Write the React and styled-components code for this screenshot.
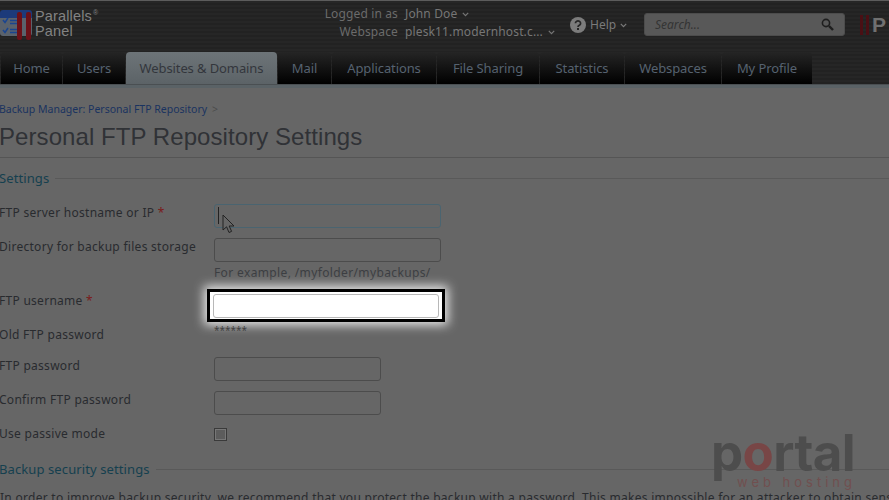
import React from 'react';
import styled, { createGlobalStyle } from 'styled-components';

const GlobalStyle = createGlobalStyle`
  html, body {
    margin: 0;
    padding: 0;
    background: #666;
  }
  body {
    font-family: "Noto Sans", "Open Sans", sans-serif;
    font-size: 12px;
  }
`;

// ######################### Styling  ################################

const Page = styled.div`
  position: relative;
  width: 889px;
  height: 500px;
  overflow: hidden;
  background: #666;
`;

const Header = styled.header`
  display: flex;
  align-items: flex-start;
  height: 51px;
  border-top: 1px solid #5c5c5c;
  background: repeating-linear-gradient(180deg, #262626 0, #262626 2px, #222 2px, #222 4px);
`;

const Logo = styled.div`
  display: flex;
  align-items: flex-start;
  padding-top: 9px;
  width: 323px;
`;

const LogoText = styled.div`
  margin: -1px 0 0 3px;
  font-family: "Liberation Sans", Arial, sans-serif;
  font-size: 14.5px;
  line-height: 14.5px;
  letter-spacing: 0.15px;
  color: #828282;
  sup {
    font-size: 7px;
    line-height: 0;
    vertical-align: 6px;
    margin-left: 1px;
  }
`;

const UserInfo = styled.div`
  display: grid;
  grid-template-columns: 75px auto;
  column-gap: 7px;
  row-gap: 2px;
  width: 238px;
  padding-top: 5px;
  font-size: 12px;
  line-height: 16px;
  letter-spacing: 0.14px;
  color: #6b6b6b;
`;

const InfoLabel = styled.span`
  text-align: right;
  white-space: nowrap;
`;

const InfoValue = styled.span`
  display: flex;
  align-items: center;
  gap: 5px;
  white-space: nowrap;
  color: #767676;
`;

const HelpLink = styled.div`
  display: flex;
  align-items: center;
  gap: 4px;
  width: 74px;
  margin-left: 9px;
  padding-top: 16px;
  color: #7a7a7a;
  font-size: 12px;
  line-height: 16px;
`;

const SearchBox = styled.div`
  display: flex;
  align-items: center;
  justify-content: space-between;
  box-sizing: border-box;
  width: 201px;
  height: 23px;
  margin-top: 12px;
  padding: 0 10px;
  border: 1px solid #4c4c4c;
  border-radius: 3px;
  background: #585858;
  color: #343434;
  font-style: italic;
  font-size: 12px;
`;

const SideMark = styled.div`
  display: flex;
  align-items: center;
  gap: 3px;
  margin: 14px 0 0 15px;
  font-family: "Liberation Sans", Arial, sans-serif;
  font-weight: 700;
  font-size: 21px;
  line-height: 20px;
  color: #707070;
`;

const MarkBar = styled.i`
  display: block;
  width: 3px;
  height: 20px;
  background: #4a0f14;
`;

const TabBar = styled.nav`
  display: flex;
  height: 32px;
  padding-left: 1px;
  gap: 1px;
  background: repeating-linear-gradient(180deg, #262626 0, #262626 2px, #222 2px, #222 4px);
`;

const Tab = styled.div`
  display: flex;
  align-items: center;
  justify-content: center;
  box-sizing: border-box;
  width: ${p => p.$width}px;
  border-radius: 4px 4px 0 0;
  font-size: 13px;
  letter-spacing: -0.1px;
  white-space: nowrap;
  color: ${p => (p.$active ? '#33363c' : '#566270')};
  background: ${p => (p.$active
    ? 'linear-gradient(180deg, #6d7478 0, #5c6367 100%)'
    : 'linear-gradient(180deg, #252525 0, #000 100%)')};
`;

const SubStrip = styled.div`
  height: 4px;
  background: #5a6266;
  border-top: 1px solid #4a4f52;
  box-sizing: border-box;
`;

const Content = styled.main`
  margin-left: -1px;
`;

const Breadcrumb = styled.div`
  padding-top: 13px;
  font-size: 10.5px;
  line-height: 16px;
  color: #1a3360;
  span {
    color: #4a4a4a;
    margin-left: 5px;
  }
`;

const Title = styled.h1`
  margin: 5px 0 0;
  padding-bottom: 6px;
  height: 29px;
  border-bottom: 1px solid #555;
  font-family: "Liberation Sans", Arial, sans-serif;
  font-size: 24px;
  font-weight: 400;
  line-height: 29px;
  letter-spacing: 0.07px;
  color: #303236;
`;

const Section = styled.div`
  display: flex;
  align-items: center;
  gap: 6px;
  margin-top: ${p => p.$top}px;
  font-size: 13px;
  line-height: 18px;
  letter-spacing: 0.1px;
  color: #15404f;
  white-space: nowrap;
  &::after {
    content: '';
    flex: 1;
    height: 1px;
    background: #595959;
  }
`;

const Row = styled.div`
  display: grid;
  grid-template-columns: 215px 1fr;
  height: ${p => p.$height}px;
  margin-top: ${p => p.$top || 0}px;
  align-items: start;
  line-height: 16px;
  color: #292b2f;
`;

const Label = styled.label`
  font-size: 12px;
  letter-spacing: 0.28px;
  white-space: nowrap;
  padding-top: ${p => p.$top || 0}px;
  em {
    font-style: normal;
    color: #7a1a1a;
  }
`;

const Field = styled.div`
  box-sizing: border-box;
  width: ${p => (p.$short ? 167 : 227)}px;
  height: 24px;
  border: 1px solid ${p => (p.$focus ? '#4a6470' : '#4c4c4c')};
  border-radius: 3px;
  background: #666;
`;

const Caret = styled.div`
  width: 1px;
  height: 17px;
  margin: 2px 0 0 3px;
  background: #222;
`;

const Hint = styled.div`
  margin-top: 3px;
  font-size: 12px;
  line-height: 16px;
  letter-spacing: 0.37px;
  color: #3c3e42;
`;

const OldValue = styled.div`
  margin-top: -3px;
  font-size: 10px;
  line-height: 12px;
  color: #3f3f3f;
`;

const Spotlight = styled.div`
  box-sizing: border-box;
  width: 238px;
  height: 33px;
  margin: -4px 0 0 -7px;
  padding: 2px 0 0 3px;
  border: 3px solid #000;
  background: #fff;
  box-shadow: 0 0 10px 3px rgba(255, 255, 255, 0.85);
`;

const SpotInput = styled.div`
  box-sizing: border-box;
  width: 226px;
  height: 24px;
  border: 1px solid #b8b8b8;
  border-radius: 3px;
  background: #fff;
`;

const CheckBox = styled.div`
  box-sizing: border-box;
  width: 13px;
  height: 13px;
  margin-top: 3px;
  border: 1px solid #3a3a3a;
  background: #5c5c5c;
  box-shadow: inset 0 0 0 1px #777;
`;

const Paragraph = styled.p`
  margin: 12px 0 0;
  padding-left: 1px;
  font-size: 12px;
  line-height: 16px;
  letter-spacing: 0.28px;
  white-space: nowrap;
  color: #292b2f;
`;

const Cursor = styled.svg`
  position: absolute;
  left: 222px;
  top: 214px;
`;

const Watermark = styled.div`
  position: absolute;
  left: 711px;
  top: 428px;
  width: 150px;
  font-family: "Inter", sans-serif;
  font-weight: 700;
  font-size: 51px;
  line-height: 50px;
  letter-spacing: -0.6px;
  color: #4d4d4d;
  b {
    font-weight: 700;
    color: #784646;
  }
`;

const WatermarkSub = styled.div`
  margin: -3px 0 0 26px;
  font-size: 13px;
  line-height: 14px;
  letter-spacing: 4px;
  white-space: nowrap;
  font-weight: 400;
  color: #714f4f;
`;

// ############################# Icons ################################

const Chevron = () => (
  <svg width="7" height="5" viewBox="0 0 7 5" fill="none" stroke="currentColor" strokeWidth="1.2">
    <path d="M.8 .8 3.5 3.6 6.2 .8" />
  </svg>
);

const ParallelsIcon = () => (
  <svg width="32" height="32" viewBox="0 0 32 32">
    <path d="M0 3a3 3 0 0 1 3-3h26a3 3 0 0 1 3 3v6H0z" fill="#1c3a7a" />
    <path d="M0 8h32v15a3 3 0 0 1-3 3H3a3 3 0 0 1-3-3z" fill="#5a626c" />
    <path d="M3 10l2 2.4 3-4.4M3 20l2 2.4 3-4.4" stroke="#1a4590" strokeWidth="1.6" fill="none" />
    <path d="M10 10.5h7M10 13.5h7M10 19.5h7M10 22.5h7" stroke="#1a4590" strokeWidth="1.3" />
    <rect x="17" y="2" width="5" height="28" rx="2" fill="#6b1118" />
    <rect x="26" y="2" width="5" height="28" rx="2" fill="#6b1118" />
  </svg>
);

const HelpIcon = () => (
  <svg width="16" height="16" viewBox="0 0 16 16">
    <circle cx="8" cy="8" r="8" fill="#7c7c7c" />
    <path d="M5.4 6.2a2.6 2.4 0 1 1 3.9 2.1c-.9.5-1.3.9-1.3 1.8" fill="none" stroke="#262626" strokeWidth="1.7" />
    <rect x="7" y="11" width="2" height="2" fill="#262626" />
  </svg>
);

const SearchIcon = () => (
  <svg width="13" height="13" viewBox="0 0 13 13" fill="none" stroke="#1e1e1e">
    <circle cx="5" cy="5" r="3.6" strokeWidth="1.6" />
    <path d="M8 8l4 4" strokeWidth="2.4" />
  </svg>
);

// ############################# Component ################################

const tabs = [
  { name: 'Home', width: 61 },
  { name: 'Users', width: 62 },
  { name: 'Websites & Domains', width: 151, active: true },
  { name: 'Mail', width: 53 },
  { name: 'Applications', width: 104 },
  { name: 'File Sharing', width: 102 },
  { name: 'Statistics', width: 84 },
  { name: 'Webspaces', width: 96 },
  { name: 'My Profile', width: 90 },
];

const App = () => (
  <Page>
    <GlobalStyle />
    <Header>
      <Logo>
        <ParallelsIcon />
        <LogoText>
          Parallels<sup>®</sup>
          <br />
          Panel
        </LogoText>
      </Logo>
      <UserInfo>
        <InfoLabel>Logged in as</InfoLabel>
        <InfoValue>John Doe <Chevron /></InfoValue>
        <InfoLabel>Webspace</InfoLabel>
        <InfoValue>plesk11.modernhost.c... <Chevron /></InfoValue>
      </UserInfo>
      <HelpLink>
        <HelpIcon />
        Help <Chevron />
      </HelpLink>
      <SearchBox>
        Search...
        <SearchIcon />
      </SearchBox>
      <SideMark>
        <MarkBar />
        <MarkBar />
        P
      </SideMark>
    </Header>
    <TabBar>
      {tabs.map(tab => (
        <Tab key={tab.name} $width={tab.width} $active={tab.active}>{tab.name}</Tab>
      ))}
    </TabBar>
    <SubStrip />
    <Content>
      <Breadcrumb>
        Backup Manager: Personal FTP Repository<span>&gt;</span>
      </Breadcrumb>
      <Title>Personal FTP Repository Settings</Title>
      <Section $top={11}>Settings</Section>
      <Row $height={34} $top={17}>
        <Label $top={1}>FTP server hostname or IP <em>*</em></Label>
        <Field $focus><Caret /></Field>
      </Row>
      <Row $height={55}>
        <Label $top={1}>Directory for backup files storage</Label>
        <div>
          <Field />
          <Hint>For example, /myfolder/mybackups/</Hint>
        </div>
      </Row>
      <Row $height={34}>
        <Label>FTP username <em>*</em></Label>
        <Spotlight><SpotInput /></Spotlight>
      </Row>
      <Row $height={30}>
        <Label>Old FTP password</Label>
        <OldValue>******</OldValue>
      </Row>
      <Row $height={34}>
        <Label $top={1}>FTP password</Label>
        <Field $short />
      </Row>
      <Row $height={34}>
        <Label $top={1}>Confirm FTP password</Label>
        <Field $short />
      </Row>
      <Row $height={35}>
        <Label $top={1}>Use passive mode</Label>
        <CheckBox />
      </Row>
      <Section $top={0}>Backup security settings</Section>
      <Paragraph>
        In order to improve backup security, we recommend that you protect the backup with a password. This makes impossible for an attacker to obtain sensitive data.
      </Paragraph>
    </Content>
    <Cursor width="14" height="20" viewBox="0 0 14 20">
      <path d="M1 1v15l3.6-3.2L7 18.5l2.6-1.1-2.4-5.4H12z" fill="#666" stroke="#222" strokeWidth="1" />
    </Cursor>
    <Watermark>
      p<b>o</b>rtal
      <WatermarkSub>web hosting</WatermarkSub>
    </Watermark>
  </Page>
);

export default App;
